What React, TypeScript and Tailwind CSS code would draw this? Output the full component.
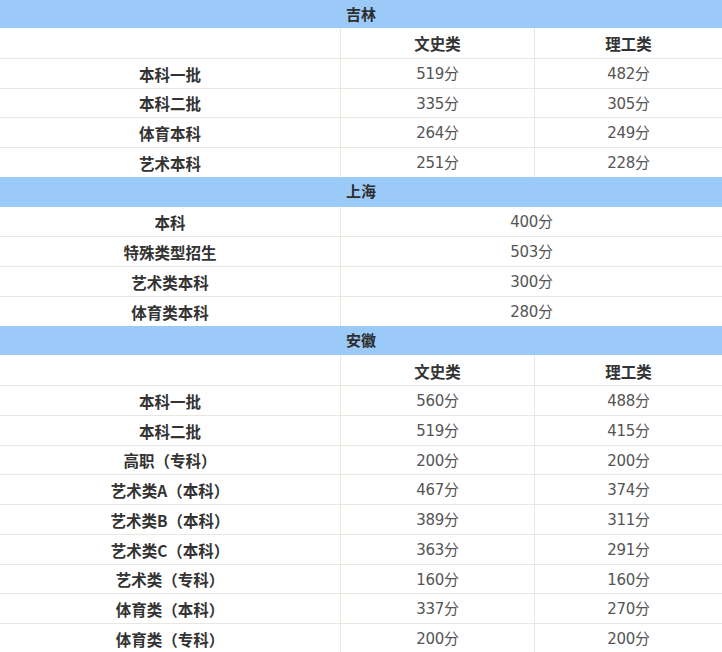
import React from "react";

// ==========================================
// DATA
// ==========================================
type Row = { label: string; values: string[] };
type Group = { province: string; split: boolean; rows: Row[] };

const groups: Group[] = [
  {
    province: "吉林",
    split: true,
    rows: [
      { label: "本科一批", values: ["519分", "482分"] },
      { label: "本科二批", values: ["335分", "305分"] },
      { label: "体育本科", values: ["264分", "249分"] },
      { label: "艺术本科", values: ["251分", "228分"] },
    ],
  },
  {
    province: "上海",
    split: false,
    rows: [
      { label: "本科", values: ["400分"] },
      { label: "特殊类型招生", values: ["503分"] },
      { label: "艺术类本科", values: ["300分"] },
      { label: "体育类本科", values: ["280分"] },
    ],
  },
  {
    province: "安徽",
    split: true,
    rows: [
      { label: "本科一批", values: ["560分", "488分"] },
      { label: "本科二批", values: ["519分", "415分"] },
      { label: "高职（专科）", values: ["200分", "200分"] },
      { label: "艺术类A（本科）", values: ["467分", "374分"] },
      { label: "艺术类B（本科）", values: ["389分", "311分"] },
      { label: "艺术类C（本科）", values: ["363分", "291分"] },
      { label: "艺术类（专科）", values: ["160分", "160分"] },
      { label: "体育类（本科）", values: ["337分", "270分"] },
      { label: "体育类（专科）", values: ["200分", "200分"] },
    ],
  },
];

const labelFont = { fontFamily: '"Noto Sans CJK SC", sans-serif' };
const numFont = { fontFamily: '"DejaVu Sans", "Noto Sans CJK SC", sans-serif' };

// ==========================================
// ROWS
// ==========================================
const ProvinceRow = ({ name, first }: { name: string; first: boolean }) => (
  <div
    className={`${first ? "h-[28px]" : "h-[29.75px]"} bg-[#9ccaf8] flex items-center justify-center text-[15px] font-bold text-[#2d2d2d]`}
    style={labelFont}
  >
    {name}
  </div>
);

const Cell = ({
  children,
  bold,
  className = "",
}: {
  children?: React.ReactNode;
  bold?: boolean;
  className?: string;
}) => (
  <div
    className={`flex items-center justify-center pt-[2px] ${bold ? "text-[15.5px] font-bold text-[#333]" : "text-[15px] text-[#555] tracking-[-0.3px]"} ${className}`}
    style={bold ? labelFont : numFont}
  >
    {children}
  </div>
);

// ==========================================
// MAIN
// ==========================================
export default function App() {
  return (
    <div className="w-[722px] h-[652px] overflow-hidden bg-white">
      {groups.map((g, gi) => (
        <div key={g.province}>
          <ProvinceRow name={g.province} first={gi === 0} />
          {g.split && (
            <div className="h-[29.75px] grid grid-cols-[340px_194px_188px]">
              <Cell bold />
              <Cell bold className="border-l border-[#ebe7de]">文史类</Cell>
              <Cell bold className="border-l border-[#ebe7de]">理工类</Cell>
            </div>
          )}
          {g.rows.map((r, ri) => (
            <div
              key={r.label}
              className={`h-[29.75px] grid grid-cols-[340px_194px_188px] ${!g.split && ri === 0 ? "" : "border-t border-[#ebe7de]"}`}
            >
              <Cell bold>{r.label}</Cell>
              {r.values.length === 2 ? (
                <>
                  <Cell className="border-l border-[#ebe7de]">{r.values[0]}</Cell>
                  <Cell className="border-l border-[#ebe7de]">{r.values[1]}</Cell>
                </>
              ) : (
                <Cell className="col-span-2 border-l border-[#ebe7de]">{r.values[0]}</Cell>
              )}
            </div>
          ))}
        </div>
      ))}
    </div>
  );
}
